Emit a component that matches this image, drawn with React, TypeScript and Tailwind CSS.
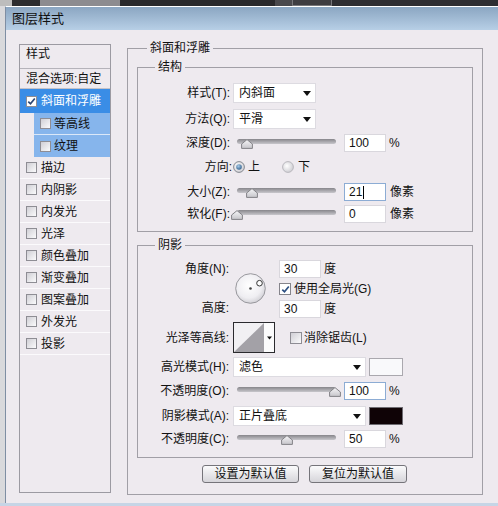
import React from "react";

const F = "font-['Liberation_Sans','Noto_Sans_CJK_SC',sans-serif]";
const BG = "bg-[#eeeaef]";

const Arrow = () => (
  <svg width="8" height="5" viewBox="0 0 8 5" className="shrink-0">
    <path d="M0 0H8L4 5Z" fill="#111" />
  </svg>
);

const Thumb = () => (
  <svg width="12" height="10" viewBox="0 0 12 10">
    <defs>
      <linearGradient id="tg" x1="0" y1="0" x2="0" y2="1">
        <stop offset="0" stopColor="#f6f6f8" />
        <stop offset="1" stopColor="#c6c5ca" />
      </linearGradient>
    </defs>
    <path d="M6 0.6 L11.4 5 V9.4 H0.6 V5 Z" fill="url(#tg)" stroke="#838287" strokeWidth="1" />
  </svg>
);

const Slider = ({ pos }: { pos: number }) => (
  <div className="relative w-[107px] h-[20px] shrink-0">
    <div className="absolute left-[4px] right-[4px] top-[6px] h-[5px] rounded-full bg-gradient-to-b from-[#87868b] to-[#c8c7cc]" />
    <div className="absolute top-[6px] h-[10px] leading-none" style={{ left: 4 + pos - 6 }}>
      <Thumb />
    </div>
  </div>
);

const Field = ({ v, focus, cursor }: { v: string; focus?: boolean; cursor?: boolean }) => (
  <div
    className={
      focus
        ? "ml-[4px] w-[42px] h-[18px] bg-white border border-[#8cacd4] pl-[4px] text-[12px] flex items-center shrink-0"
        : "ml-[4px] w-[42px] h-[18px] bg-white border border-[#d9d7dd] pl-[4px] text-[12px] flex items-center shrink-0"
    }
  >
    {v}
    {cursor && <span className="inline-block w-[1px] h-[13px] bg-black ml-[1px]" />}
  </div>
);

const Drop = ({ v, w }: { v: string; w: string }) => (
  <div className={`${w} h-[20px] bg-white border border-[#dddbe1] pl-[5px] pr-[4px] flex items-center justify-between shrink-0`}>
    <span>{v}</span>
    <Arrow />
  </div>
);

const Check = ({ color = "#2b4674" }: { color?: string }) => (
  <svg width="9" height="9" viewBox="0 0 9 9">
    <path d="M1.3 4.6 L3.5 6.8 L7.8 1.5" fill="none" stroke={color} strokeWidth="1.7" />
  </svg>
);

const Box = ({ checked }: { checked?: boolean }) => (
  <div
    className={
      checked
        ? "w-[11px] h-[11px] border border-[#8e8d94] bg-white shrink-0 flex items-center justify-center"
        : "w-[11px] h-[11px] border border-[#8e8d94] bg-gradient-to-br from-[#d0cfd5] to-[#fbfbfc] shrink-0"
    }
  >
    {checked && <Check />}
  </div>
);

const Radio = ({ on }: { on?: boolean }) => (
  <svg width="12" height="12" viewBox="0 0 12 12" className="shrink-0">
    <defs>
      <radialGradient id="rg" cx="0.4" cy="0.4" r="0.7">
        <stop offset="0" stopColor="#ffffff" />
        <stop offset="1" stopColor="#c9c8ce" />
      </radialGradient>
      <radialGradient id="rb" cx="0.4" cy="0.35" r="0.7">
        <stop offset="0" stopColor="#a9cbe8" />
        <stop offset="1" stopColor="#2f5f8c" />
      </radialGradient>
    </defs>
    <circle cx="6" cy="6" r="5.4" fill="url(#rg)" stroke={on ? "#7b8088" : "#b4b3b9"} strokeWidth="0.9" />
    {on && <circle cx="6" cy="6" r="2.8" fill="url(#rb)" />}
  </svg>
);

const Dial = () => (
  <svg width="31" height="31" viewBox="0 0 31 31" className="shrink-0">
    <defs>
      <radialGradient id="dg" cx="0.45" cy="0.4" r="0.6">
        <stop offset="0" stopColor="#ffffff" />
        <stop offset="0.7" stopColor="#efeef2" />
        <stop offset="1" stopColor="#d3d2d7" />
      </radialGradient>
    </defs>
    <circle cx="15.5" cy="15.5" r="14.8" fill="url(#dg)" stroke="#8f8e94" strokeWidth="0.9" />
    <circle cx="15.5" cy="15.5" r="1.3" fill="#444" />
    <circle cx="24.5" cy="10.2" r="2.8" fill="#fff" stroke="#333" strokeWidth="1" />
  </svg>
);

const Contour = () => (
  <svg width="42" height="31" viewBox="0 0 42 31" className="shrink-0">
    <rect x="0.5" y="0.5" width="41" height="30" fill="#fbfbfc" stroke="#2a2a2e" />
    <rect x="1" y="1" width="30" height="29" fill="#f1f0f3" />
    <path d="M1 30 L31 1 V30 Z" fill="#a3a1a7" />
    <path d="M34 14.5 H39 L36.5 17.5 Z" fill="#111" />
  </svg>
);

const listItems = ["描边", "内阴影", "内发光", "光泽", "颜色叠加", "渐变叠加", "图案叠加", "外发光", "投影"];

export default function App() {
  return (
    <div className={`w-[498px] h-[506px] bg-[#d9d9dc] flex flex-col overflow-hidden text-[12px] text-[#111] ${F}`}>
      {/* top strip */}
      <div className="h-[6px] bg-[#323135] flex shrink-0">
        <div className="w-[12px] bg-[#bdbdbd]" />
        <div className="w-[28px] bg-[#2c2c2f]" />
        <div className="w-[80px] bg-[#8d8c90]" />
        <div className="w-[155px] bg-[#2a292c]" />
        <div className="w-[17px] bg-[#4a494d]" />
        <div className="w-[40px] border-x border-b border-[#77767a] bg-[#3e3d41]" />
        <div className="flex-1 bg-[#2e2d31]" />
      </div>
      {/* window */}
      <div className="flex-1 ml-[5px] border-l border-[#7f8ea3] border-t border-t-white flex flex-col">
        <div className="h-[23px] shrink-0 bg-gradient-to-b from-[#8ba6c2] to-[#b7cfe6] pl-[6px] flex items-center text-[13px]">
          图层样式
        </div>
        <div className={`flex-1 ${BG} flex items-start`}>
          {/* left list */}
          <div className="ml-[13px] mt-[14px] w-[92px] h-[449px] border border-[#9c9aa2] flex flex-col shrink-0">
            <div className="h-[24px] pl-[6px] pt-[1px] leading-[16px] border-b border-[#b5b3ba]">样式</div>
            <div className="h-[20px] pl-[6px] flex items-center border-b border-[#c4c2c8]">混合选项:自定</div>
            <div className="h-[24px] bg-[#3a8de6] text-white pl-[6px] flex items-center gap-[4px]">
              <Box checked />
              <span>斜面和浮雕</span>
            </div>
            <div className="h-[22px] flex">
              <div className="w-[14px]" />
              <div className="flex-1 bg-[#86b5ec] border-b border-[#dbe8f8] pl-[6px] flex items-center gap-[3px]">
                <Box />
                <span>等高线</span>
              </div>
            </div>
            <div className="h-[22px] flex">
              <div className="w-[14px]" />
              <div className="flex-1 bg-[#86b5ec] pl-[6px] flex items-center gap-[3px]">
                <Box />
                <span>纹理</span>
              </div>
            </div>
            {listItems.map((t) => (
              <div key={t} className="h-[22px] pl-[6px] flex items-center gap-[4px] border-b border-[#fbfafc]">
                <Box />
                <span>{t}</span>
              </div>
            ))}
          </div>

          {/* main group */}
          <div className="ml-[16px] mt-[18px] w-[356px] h-[447px] border border-[#a19fa6] flex flex-col shrink-0">
            <div className={`-mt-[9px] ml-[19px] px-[3px] ${BG} w-fit h-[16px] leading-[16px]`}>斜面和浮雕</div>

            {/* 结构 */}
            <div className="mt-[11px] ml-[9px] w-[336px] h-[165px] border border-[#a19fa6] flex flex-col shrink-0">
              <div className={`-mt-[9px] ml-[17px] px-[3px] ${BG} w-fit h-[16px] leading-[16px]`}>结构</div>
              <div className="mt-[6px] h-[24px] flex items-center">
                <div className="w-[92px] text-right shrink-0">样式(T):</div>
                <div className="ml-[3px]">
                  <Drop v="内斜面" w="w-[83px]" />
                </div>
              </div>
              <div className="mt-[2px] h-[24px] flex items-center">
                <div className="w-[92px] text-right shrink-0">方法(Q):</div>
                <div className="ml-[3px]">
                  <Drop v="平滑" w="w-[83px]" />
                </div>
              </div>
              <div className="h-[24px] flex items-center">
                <div className="w-[92px] text-right shrink-0">深度(D):</div>
                <div className="ml-[3px] flex items-center">
                  <Slider pos={10} />
                  <Field v="100" />
                  <span className="ml-[3px]">%</span>
                </div>
              </div>
              <div className="h-[24px] flex items-center">
                <div className="w-[94px] text-right shrink-0">方向:</div>
                <div className="ml-[1px] flex items-center">
                  <Radio on />
                  <span className="ml-[3px]">上</span>
                  <span className="ml-[22px]">
                    <Radio />
                  </span>
                  <span className="ml-[4px]">下</span>
                </div>
              </div>
              <div className="mt-[1px] h-[24px] flex items-center">
                <div className="w-[92px] text-right shrink-0">大小(Z):</div>
                <div className="ml-[3px] flex items-center">
                  <Slider pos={15} />
                  <Field v="21" focus cursor />
                  <span className="ml-[4px]">像素</span>
                </div>
              </div>
              <div className="h-[20px] flex items-center">
                <div className="w-[92px] text-right shrink-0">软化(F):</div>
                <div className="ml-[3px] flex items-center">
                  <Slider pos={0} />
                  <Field v="0" />
                  <span className="ml-[4px]">像素</span>
                </div>
              </div>
            </div>

            {/* 阴影 */}
            <div className="mt-[13px] ml-[9px] w-[336px] h-[213px] border border-[#a19fa6] flex flex-col shrink-0">
              <div className={`-mt-[9px] ml-[17px] px-[3px] ${BG} w-fit h-[16px] leading-[16px]`}>阴影</div>
              <div className="mt-[6px] flex">
                <div className="w-[91px] shrink-0 flex flex-col text-right">
                  <div className="h-[20px] leading-[20px]">角度(N):</div>
                  <div className="h-[20px]" />
                  <div className="h-[19px] leading-[19px]">高度:</div>
                </div>
                <div className="ml-[6px] mt-[14px]">
                  <Dial />
                </div>
                <div className="ml-[9px] flex flex-col">
                  <div className="h-[20px] flex items-center">
                    <Field v="30" />
                    <span className="ml-[3px]">度</span>
                  </div>
                  <div className="h-[20px] flex items-center">
                    <div className="ml-[4px] w-[12px] h-[12px] border border-[#85848b] bg-white flex items-center justify-center">
                      <Check color="#2d4f82" />
                    </div>
                    <span className="ml-[3px]">使用全局光(G)</span>
                  </div>
                  <div className="h-[19px] flex items-center">
                    <Field v="30" />
                    <span className="ml-[3px]">度</span>
                  </div>
                </div>
              </div>
              <div className="mt-[4px] h-[31px] flex items-center">
                <div className="w-[91px] text-right shrink-0">光泽等高线:</div>
                <div className="ml-[4px]">
                  <Contour />
                </div>
                <div className="ml-[15px] w-[12px] h-[12px] border border-[#8e8d94] bg-gradient-to-br from-[#d0cfd5] to-[#fbfbfc]" />
                <span className="ml-[2px]">消除锯齿(L)</span>
              </div>
              <div className="mt-[2px] h-[24px] flex items-center">
                <div className="w-[91px] text-right shrink-0">高光模式(H):</div>
                <div className="ml-[4px]">
                  <Drop v="滤色" w="w-[133px]" />
                </div>
                <div className="ml-[3px] w-[34px] h-[18px] bg-[#f9f9fb] border border-[#aaa8ae]" />
              </div>
              <div className="h-[24px] flex items-center">
                <div className="w-[91px] text-right shrink-0">不透明度(O):</div>
                <div className="ml-[4px] flex items-center">
                  <Slider pos={98} />
                  <Field v="100" focus />
                  <span className="ml-[3px]">%</span>
                </div>
              </div>
              <div className="mt-[1px] h-[24px] flex items-center">
                <div className="w-[91px] text-right shrink-0">阴影模式(A):</div>
                <div className="ml-[4px]">
                  <Drop v="正片叠底" w="w-[133px]" />
                </div>
                <div className="ml-[3px] w-[34px] h-[18px] bg-[#0f0306] border border-[#6e6c72]" />
              </div>
              <div className="h-[22px] flex items-center">
                <div className="w-[91px] text-right shrink-0">不透明度(C):</div>
                <div className="ml-[4px] flex items-center">
                  <Slider pos={50} />
                  <Field v="50" />
                  <span className="ml-[3px]">%</span>
                </div>
              </div>
            </div>

            {/* buttons */}
            <div className="mt-[7px] ml-[74px] flex gap-[10px]">
              <div className="w-[97px] h-[18px] rounded-[3px] border border-[#75747a] bg-gradient-to-b from-[#fbfbfc] to-[#d6d5da] flex items-center justify-center">
                设置为默认值
              </div>
              <div className="w-[98px] h-[18px] rounded-[3px] border border-[#75747a] bg-gradient-to-b from-[#fbfbfc] to-[#d6d5da] flex items-center justify-center">
                复位为默认值
              </div>
            </div>
          </div>
        </div>
      </div>
      <div className="h-[3px] bg-[#c6d5e6] shrink-0" />
    </div>
  );
}
